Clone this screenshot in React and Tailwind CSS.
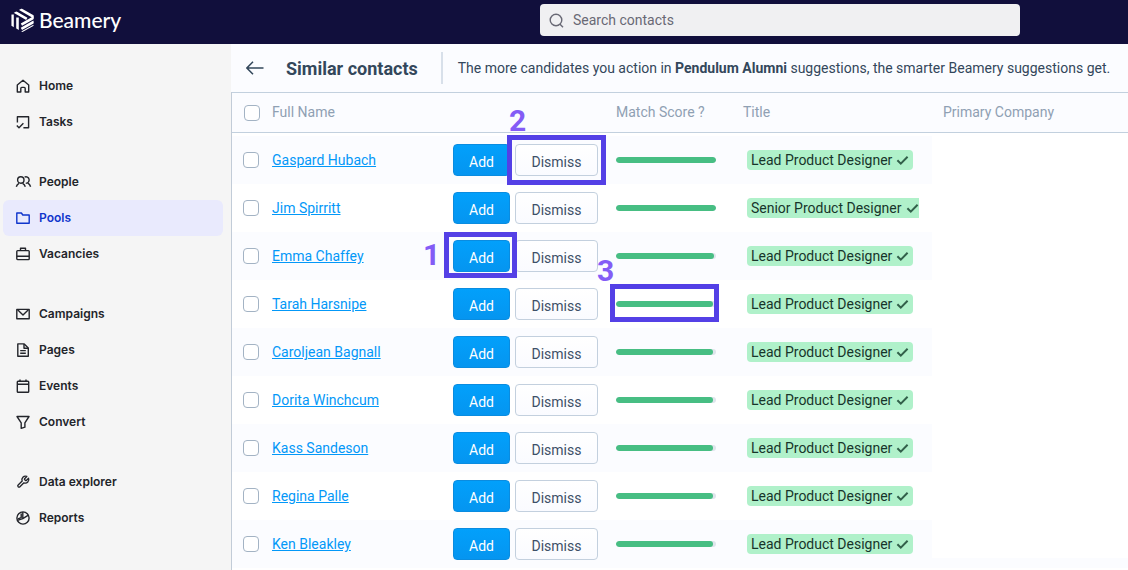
import React from "react";

const glyphs = {
  home: <path d="M1.3 6 7 1.3 12.7 6v7H9.2V9.4a1 1 0 0 0-1-1H5.8a1 1 0 0 0-1 1V13H1.3Z" />,
  tasks: (
    <>
      <path d="M1.4 7.6V1.7h11.2v11H7.4" />
      <path d="m.8 10.4 2.2 2.3 4.4-4.4" />
    </>
  ),
  people: (
    <>
      <circle cx="4.8" cy="5" r="3.2" />
      <path d="M.3 11.8C.8 10 1.8 8.9 3 8.3M9.3 11.8C8.8 10 7.8 8.9 6.6 8.3" />
      <path d="M8.6 2.1a3.2 3.2 0 1 1 1.2 6.1M11.8 8.2c1.4.7 2.3 1.8 2.8 3.5" />
    </>
  ),
  pools: <path d="M.8 2h4.6l1.4 2h6.4v8.3H.8Z" />,
  vacancies: (
    <>
      <rect x=".8" y="3.6" width="12.4" height="9" rx=".8" />
      <path d="M4.5 3.4V1.2h5v2.2M.8 9.3h12.4" />
    </>
  ),
  campaigns: (
    <>
      <path d="M.8 2.4h12.4v9.4H.8Z" />
      <path d="M1.6 2.8 7 8l5.4-5.2" />
    </>
  ),
  pages: (
    <>
      <path d="M1.8.9h6.4l4.1 4v8.3H1.8Z" />
      <path d="M8 1v4.2h4M4.2 7.6h5.6M4.2 10.3h5.6" />
    </>
  ),
  events: (
    <>
      <rect x="1.3" y="2.2" width="11.4" height="11" rx=".8" />
      <path d="M1.3 5.3h11.4M4 .4v2M10 .4v2" />
    </>
  ),
  convert: <path d="M1 1.5h12L8.9 7.8v4.4l-3.7 1.2V7.8Z" />,
  explorer: (
    <path
      transform="scale(.5833)"
      strokeWidth="2.3"
      d="M14.7 6.3a1 1 0 0 0 0 1.4l1.6 1.6a1 1 0 0 0 1.4 0l3.8-3.8a6 6 0 0 1-7.9 7.9l-6.9 6.9a2.1 2.1 0 0 1-3-3l6.9-6.9a6 6 0 0 1 7.9-7.9z"
    />
  ),
  reports: (
    <>
      <circle cx="7" cy="7" r="6.1" />
      <path d="M6.8 1v6.6L1.4 9.4M6.8 7.6l5.6-3.4" />
      <path d="M5.2 2.6v4L2 7.8" />
    </>
  ),
};

const groups = [
  [["Home", "home"], ["Tasks", "tasks"]],
  [["People", "people"], ["Pools", "pools"], ["Vacancies", "vacancies"]],
  [["Campaigns", "campaigns"], ["Pages", "pages"], ["Events", "events"], ["Convert", "convert"]],
  [["Data explorer", "explorer"], ["Reports", "reports"]],
];

const contacts = [
  { name: "Gaspard Hubach", score: 100, title: "Lead Product Designer" },
  { name: "Jim Spirritt", score: 100, title: "Senior Product Designer" },
  { name: "Emma Chaffey", score: 98, title: "Lead Product Designer" },
  { name: "Tarah Harsnipe", score: 97, title: "Lead Product Designer" },
  { name: "Caroljean Bagnall", score: 97, title: "Lead Product Designer" },
  { name: "Dorita Winchcum", score: 97, title: "Lead Product Designer" },
  { name: "Kass Sandeson", score: 97, title: "Lead Product Designer" },
  { name: "Regina Palle", score: 97, title: "Lead Product Designer" },
  { name: "Ken Bleakley", score: 97, title: "Lead Product Designer" },
];

function Logo() {
  return (
    <a href="#" className="flex items-center gap-[5px] text-white">
      <svg viewBox="0 0 23 24" className="h-6 w-[23px]" fill="none" stroke="currentColor" strokeWidth="2.6" aria-hidden="true">
        <clipPath id="mark">
          <path d="M11.5 0 22.7 6.2v11.6L11.5 24 .3 17.8V6.2Z" />
        </clipPath>
        <g clipPath="url(#mark)">
          <path d="M1.5 6.6v14M6.5 9.6V24" />
          <path d="M7.4.2 23 9M2.4 3.2l13.4 7.6" />
          <path d="M10.4 16.6 23 9.5M10.4 20.8 23 13.7M10.4 25 23 17.9" />
        </g>
      </svg>
      <span className="font-[Lato,sans-serif] text-[21px] leading-6 font-medium">Beamery</span>
    </a>
  );
}

function NavItem({ label, icon }) {
  const active = label === "Pools";
  return (
    <li>
      <a
        href="#"
        aria-current={active ? "page" : undefined}
        className={`flex h-9 items-center gap-[9px] rounded-md pl-[13px] font-[Inter,sans-serif] text-xs font-semibold ${
          active ? "bg-[#e9eafd] text-[#0f35cc]" : "text-[#23252b]"
        }`}
      >
        <svg viewBox="0 0 14 14" className="size-3.5 overflow-visible" fill="none" stroke="currentColor" strokeWidth="1.4" strokeLinejoin="round" aria-hidden="true">
          {glyphs[icon]}
        </svg>
        {label}
      </a>
    </li>
  );
}

function Check({ label }) {
  return (
    <input
      type="checkbox"
      aria-label={label}
      className="block size-4 appearance-none rounded border border-[#a3b3c4] bg-white checked:bg-[#0099fa]"
    />
  );
}

const frame = "pointer-events-none absolute z-10 border-5 border-[#5440e6]";
const digit = "pointer-events-none absolute z-10 text-[30px] leading-[30px] font-bold text-[#845cf6]";

function Row({ contact, index }) {
  const tint = index % 2 === 0 ? "bg-[#fbfcff]" : "bg-white";
  const last = index === contacts.length - 1;
  return (
    <tr className="h-12">
      <td className={`${tint} pl-[11px]`}>
        <Check label={`Select ${contact.name}`} />
      </td>
      <td className={tint}>
        <a href="#" className="text-[#0398f8] underline underline-offset-1">{contact.name}</a>
      </td>
      <td className={tint}>
        <div className="flex gap-[5px]">
          <div className="relative">
            <button className="block h-8 w-[57px] rounded border border-[#0a8ce0] bg-linear-to-b from-[#02a0fb] to-[#0595f0] pt-[3px] text-white">Add</button>
            {index === 2 && (
              <>
                <span className={`${frame} -top-2 -right-[7px] -bottom-1.5 -left-[9px]`} />
                <span className={`${digit} top-0 -left-[30px]`}>1</span>
              </>
            )}
          </div>
          <div className="relative">
            <button className="block h-8 w-[83px] rounded border border-[#c3d0de] bg-linear-to-b from-white to-[#fafbff] pt-[3px] text-[#3d5067]">Dismiss</button>
            {index === 0 && (
              <>
                <span className={`${frame} -inset-x-2 -inset-y-[9px]`} />
                <span className={`${digit} -top-[38px] -left-1.5`}>2</span>
              </>
            )}
          </div>
        </div>
      </td>
      <td className={tint}>
        <div className="relative w-[100px]">
          <div role="meter" aria-label="Match score" aria-valuemin={0} aria-valuemax={100} aria-valuenow={contact.score} className="h-1.5 overflow-hidden rounded-full bg-[#dfe5ec]">
            <div className="h-full rounded-full bg-[#47be83]" style={{ width: `${contact.score}%` }} />
          </div>
          {index === 3 && (
            <>
              <span className={`${frame} -top-[17px] -right-[3px] -bottom-[15px] -left-1.5`} />
              <span className={`${digit} -top-[45px] -left-[19px]`}>3</span>
            </>
          )}
        </div>
      </td>
      <td className={`${tint} pr-[13px] pl-1`}>
        <div className="overflow-hidden">
          <span className="flex h-5 w-max items-center gap-1 rounded bg-[#b0f1ca] px-1 text-[#17352a]">
            {contact.title}
            <svg viewBox="0 0 13 10" className="h-2.5 w-[13px]" fill="none" stroke="#32604a" strokeWidth="2" aria-hidden="true">
              <path d="m1.4 5.2 3.4 3.4L11.6 1.8" />
            </svg>
          </span>
        </div>
      </td>
      <td className={last ? "bg-[linear-gradient(#fff_38px,#fbfcff_38px)]" : "bg-white"} />
    </tr>
  );
}

export default function App() {
  const th = "border-y border-[#c2d0de] pb-0.5 font-normal";
  return (
    <div className="flex min-h-screen flex-col bg-white font-[Roboto,sans-serif] text-sm text-[#33475b]">
      <header className="flex h-11 items-center justify-between bg-[#110f3c] pr-[108px] pb-1 pl-[11px]">
        <Logo />
        <label className="flex h-8 w-[480px] items-center gap-[9px] rounded bg-[#f0f0f2] px-[9px] text-[#696975]">
          <svg viewBox="0 0 15 15" className="size-[15px] shrink-0" fill="none" stroke="currentColor" strokeWidth="1.4" aria-hidden="true">
            <circle cx="7" cy="7" r="5.8" />
            <path d="m10.8 11 3.2 3.2" />
          </svg>
          <input type="search" aria-label="Search contacts" placeholder="Search contacts" className="w-full bg-transparent outline-none placeholder:text-[#696975]" />
        </label>
      </header>
      <div className="flex grow">
        <nav className="w-[231px] shrink-0 bg-[#f5f5f5] pt-6 pr-2 pl-[3px]">
          <div className="flex flex-col gap-6">
            {groups.map((items, i) => (
              <ul key={i}>
                {items.map(([label, icon]) => (
                  <NavItem key={label} label={label} icon={icon} />
                ))}
              </ul>
            ))}
          </div>
        </nav>
        <main className="flex min-w-0 grow flex-col">
          <div className="flex h-12 items-center bg-[#fbfcff] pl-[15px]">
            <button aria-label="Back">
              <svg viewBox="0 0 18 14" className="h-3.5 w-[18px]" fill="none" stroke="currentColor" strokeWidth="1.5" aria-hidden="true">
                <path d="M17.5 7H1M7 .8.9 7 7 13.2" />
              </svg>
            </button>
            <h1 className="ml-[22px] pt-0.5 text-lg font-bold">Similar contacts</h1>
            <div className="ml-[23px] h-8 w-0.5 bg-[#d8e0ea]" />
            <p className="ml-[15px] whitespace-nowrap">
              The more candidates you action in <b>Pendulum Alumni</b> suggestions, the smarter Beamery suggestions get.
            </p>
          </div>
          <div className="grow border-l border-[#c2ccd8]">
            <table className="w-full table-fixed border-separate border-spacing-0 text-left">
              <colgroup>
                <col className="w-10" />
                <col className="w-[181px]" />
                <col className="w-[163px]" />
                <col className="w-[127px]" />
                <col className="w-[189px]" />
                <col />
              </colgroup>
              <thead>
                <tr className="h-[41px] bg-[#fbfcff] text-[#8fa0b3]">
                  <th className="border-y border-[#c2d0de] pl-3"><Check label="Select all contacts" /></th>
                  <th className={th}>Full Name</th>
                  <th className={th} aria-label="Actions" />
                  <th className={th}>Match Score ?</th>
                  <th className={th}>Title</th>
                  <th className={`${th} pl-[11px]`}>Primary Company</th>
                </tr>
              </thead>
              <tbody className="before:block before:h-[3px]">
                {contacts.map((contact, index) => (
                  <Row key={contact.name} contact={contact} index={index} />
                ))}
              </tbody>
            </table>
          </div>
        </main>
      </div>
    </div>
  );
}
